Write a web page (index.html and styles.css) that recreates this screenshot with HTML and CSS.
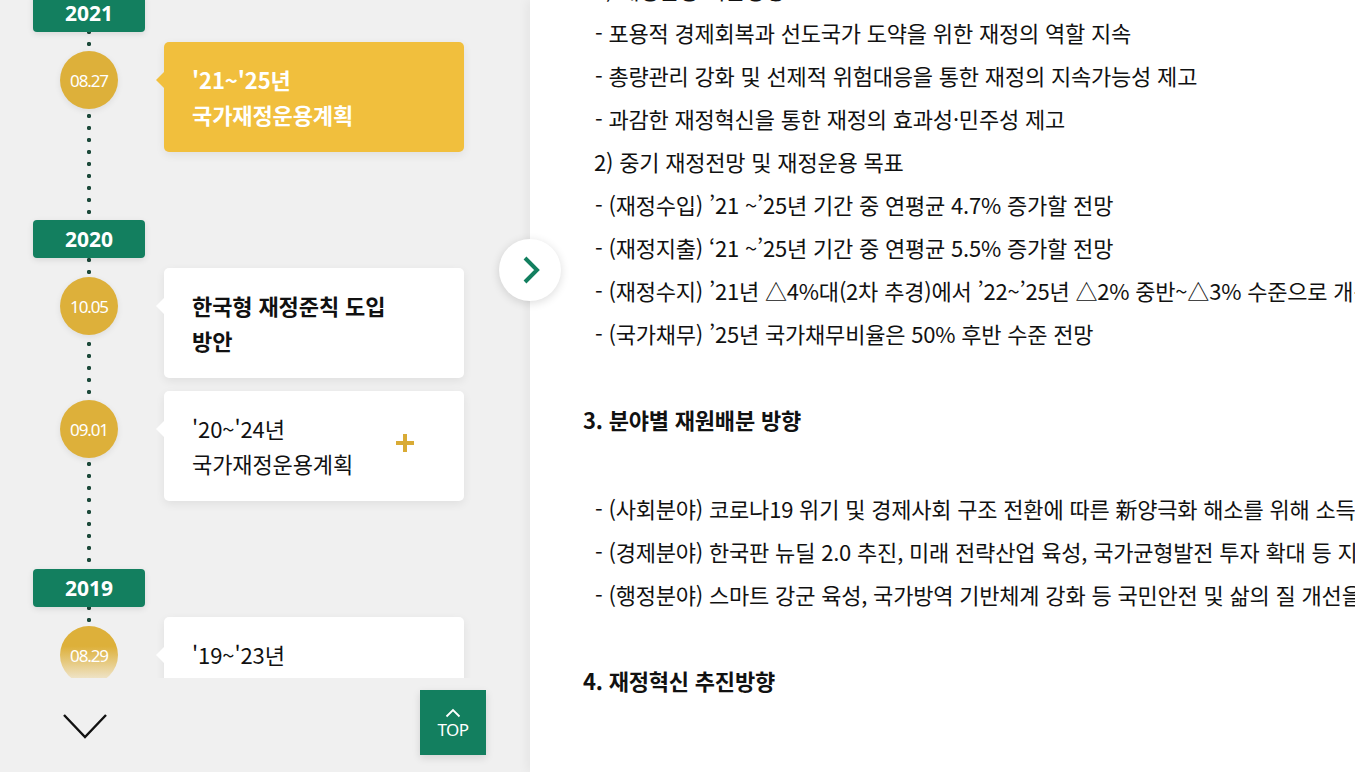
FILE: index.html
```html
<!DOCTYPE html>
<html lang="ko">
<head>
<meta charset="utf-8">
<title>국가재정운용계획</title>
<link rel="stylesheet" href="styles.css">
</head>
<body>
<div class="page">
  <aside class="side">
    <div class="timeline">
      <div class="timeline-inner">
        <section class="year-group">
          <div class="year">2021</div>
          <div class="item">
            <div class="dot-col"><span class="dot">08.27</span></div>
            <div class="card card-active"><p class="card-title strong">'21~'25년<br>국가재정운용계획</p></div>
          </div>
        </section>
        <section class="year-group">
          <div class="year">2020</div>
          <div class="item">
            <div class="dot-col"><span class="dot">10.05</span></div>
            <div class="card"><p class="card-title strong">한국형 재정준칙 도입<br>방안</p></div>
          </div>
          <div class="item">
            <div class="dot-col"><span class="dot">09.01</span></div>
            <div class="card"><p class="card-title">'20~'24년<br>국가재정운용계획</p><span class="plus" aria-hidden="true"></span></div>
          </div>
        </section>
        <section class="year-group">
          <div class="year">2019</div>
          <div class="item item-fade">
            <div class="dot-col"><span class="dot">08.29</span></div>
            <div class="card"><p class="card-title">'19~'23년<br>국가재정운용계획</p></div>
          </div>
        </section>
      </div>
    </div>
    <div class="side-foot">
      <button class="down" type="button" aria-label="다음 목록">
        <svg width="46" height="28" viewBox="0 0 46 28"><path d="M2 3 L23 25 L44 3" fill="none" stroke="#111" stroke-width="2.4"/></svg>
      </button>
      <a class="top" href="#">
        <svg width="16" height="10" viewBox="0 0 16 10"><path d="M1.5 8.5 L8 2 L14.5 8.5" fill="none" stroke="#fff" stroke-width="1.8"/></svg>
        <span>TOP</span>
      </a>
    </div>
  </aside>
  <button class="next" type="button" aria-label="다음">
    <svg width="20" height="28" viewBox="0 0 20 28"><path d="M3 2 L15 14 L3 26" fill="none" stroke="#137f5f" stroke-width="4"/></svg>
  </button>
  <main class="content">
    <div class="doc">
      <p class="line">1) 재정운용 기본방향</p>
      <p class="line sub">- 포용적 경제회복과 선도국가 도약을 위한 재정의 역할 지속</p>
      <p class="line sub">- 총량관리 강화 및 선제적 위험대응을 통한 재정의 지속가능성 제고</p>
      <p class="line sub">- 과감한 재정혁신을 통한 재정의 효과성·민주성 제고</p>
      <p class="line">2) 중기 재정전망 및 재정운용 목표</p>
      <p class="line sub">- (재정수입) ’21 ~’25년 기간 중 연평균 4.7% 증가할 전망</p>
      <p class="line sub">- (재정지출) ‘21 ~’25년 기간 중 연평균 5.5% 증가할 전망</p>
      <p class="line sub">- (재정수지) ’21년 △4%대(2차 추경)에서 ’22~’25년 △2% 중반~△3% 수준으로 개선 전망</p>
      <p class="line sub">- (국가채무) ’25년 국가채무비율은 50% 후반 수준 전망</p>
      <h2 class="heading">3. 분야별 재원배분 방향</h2>
      <p class="line sub">- (사회분야) 코로나19 위기 및 경제사회 구조 전환에 따른 新양극화 해소를 위해 소득·고용 안전망 강화</p>
      <p class="line sub">- (경제분야) 한국판 뉴딜 2.0 추진, 미래 전략산업 육성, 국가균형발전 투자 확대 등 지속 성장 기반 확충</p>
      <p class="line sub">- (행정분야) 스마트 강군 육성, 국가방역 기반체계 강화 등 국민안전 및 삶의 질 개선을 위한 투자</p>
      <h2 class="heading heading-last">4. 재정혁신 추진방향</h2>
    </div>
  </main>
</div>
</body>
</html>
```
FILE: styles.css
```css
* { box-sizing: border-box; }
html, body { margin: 0; padding: 0; }
body {
  font-family: "Noto Sans CJK KR", "Noto Sans", sans-serif;
  color: #111;
  background: #fff;
  overflow: hidden;
}
.page {
  position: relative;
  display: flex;
  width: 1355px;
  height: 772px;
  overflow: hidden;
}
.side {
  width: 530px;
  flex: none;
  background: #f0f0f0;
  display: flex;
  flex-direction: column;
}
.timeline {
  height: 678px;
  overflow: hidden;
  padding-left: 33px;
  background-image: radial-gradient(circle, #1d4a3b 1.9px, rgba(29,74,59,0) 2.4px);
  background-size: 6px 12px;
  background-position: 86px 2px;
  background-repeat: repeat-y;
}
.timeline-inner { margin-top: -6px; }
.year-group { padding-bottom: 55px; }
.year {
  width: 112px;
  height: 38px;
  margin-bottom: 10px;
  border-radius: 4px;
  background: #137f5f;
  color: #fff;
  font-family: "Noto Sans", sans-serif;
  font-weight: 700;
  font-size: 21px;
  line-height: 38px;
  text-align: center;
  box-shadow: 0 2px 6px rgba(0,0,0,0.1);
}
.item {
  display: flex;
  gap: 19px;
  margin-bottom: 13px;
}
.dot-col {
  width: 112px;
  display: flex;
  justify-content: center;
  align-items: flex-start;
}
.dot {
  width: 58px;
  height: 58px;
  margin-top: 9px;
  border-radius: 50%;
  background: #ddb03a;
  color: #fff;
  font-family: "Noto Sans", sans-serif;
  font-size: 17px;
  letter-spacing: -1.1px;
  display: flex;
  align-items: center;
  justify-content: center;
  box-shadow: 0 2px 6px rgba(0,0,0,0.08);
}
.card {
  position: relative;
  width: 300px;
  height: 110px;
  padding: 0 50px 0 28px;
  border-radius: 5px;
  background: #fff;
  display: flex;
  align-items: center;
  justify-content: space-between;
  box-shadow: 0 3px 10px rgba(0,0,0,0.07);
}
.card::before {
  content: "";
  position: absolute;
  left: -8px;
  top: 30px;
  border-style: solid;
  border-width: 8px 8px 8px 0;
  border-color: transparent #fff transparent transparent;
}
.card-active { background: #f1bf3d; }
.card-active::before { border-right-color: #f1bf3d; }
.card-title {
  margin: 0;
  font-size: 22px;
  line-height: 35px;
  letter-spacing: -0.1px;
  color: #111;
}
.card-title.strong { font-weight: 700; }
.card-active .card-title { color: #fff; }
.plus {
  position: relative;
  width: 18px;
  height: 18px;
  margin-top: -6px;
  background:
    linear-gradient(#d9ab35, #d9ab35) center / 18px 4px no-repeat,
    linear-gradient(#d9ab35, #d9ab35) center / 4px 18px no-repeat;
}
.item-fade .dot {
  background: linear-gradient(#ddb03a 35%, #f2ecdf 100%);
  box-shadow: none;
}
.side-foot {
  flex: 1;
  display: flex;
  align-items: flex-start;
  justify-content: space-between;
  padding: 12px 44px 0 62px;
}
.down {
  margin-top: 22px;
  padding: 0;
  border: 0;
  background: none;
  width: 46px;
  height: 28px;
  display: block;
}
.down svg { display: block; }
.top {
  width: 66px;
  height: 65px;
  background: #137f5f;
  color: #fff;
  text-decoration: none;
  display: flex;
  flex-direction: column;
  align-items: center;
  justify-content: center;
  gap: 2px;
  font-family: "Noto Sans", sans-serif;
  font-size: 17px;
  line-height: 20px;
  letter-spacing: -0.5px;
  box-shadow: 0 3px 8px rgba(0,0,0,0.12);
}
.top svg { display: block; margin-top: 2px; }
.next {
  position: absolute;
  left: 499px;
  top: 239px;
  width: 62px;
  height: 62px;
  border-radius: 50%;
  border: 0;
  padding: 0 0 0 4px;
  background: #fff;
  box-shadow: 0 2px 10px rgba(0,0,0,0.14);
  display: flex;
  align-items: center;
  justify-content: center;
  z-index: 2;
}
.next svg { display: block; }
.content {
  flex: 1;
  min-width: 0;
  background: #fff;
  overflow: hidden;
  box-shadow: -3px 0 10px rgba(0,0,0,0.05);
}
.doc {
  margin-top: -32px;
  padding-left: 53px;
}
.line, .heading {
  margin: 0;
  white-space: nowrap;
  font-size: 22px;
  line-height: 43px;
  letter-spacing: -0.2px;
  font-weight: 400;
  color: #111;
}
.line { padding-left: 11px; }
.line.sub { padding-left: 12px; }
.heading {
  font-weight: 700;
  margin-top: 43px;
  margin-bottom: 46px;
}
.heading-last { margin-top: 43px; margin-bottom: 0; }
```
